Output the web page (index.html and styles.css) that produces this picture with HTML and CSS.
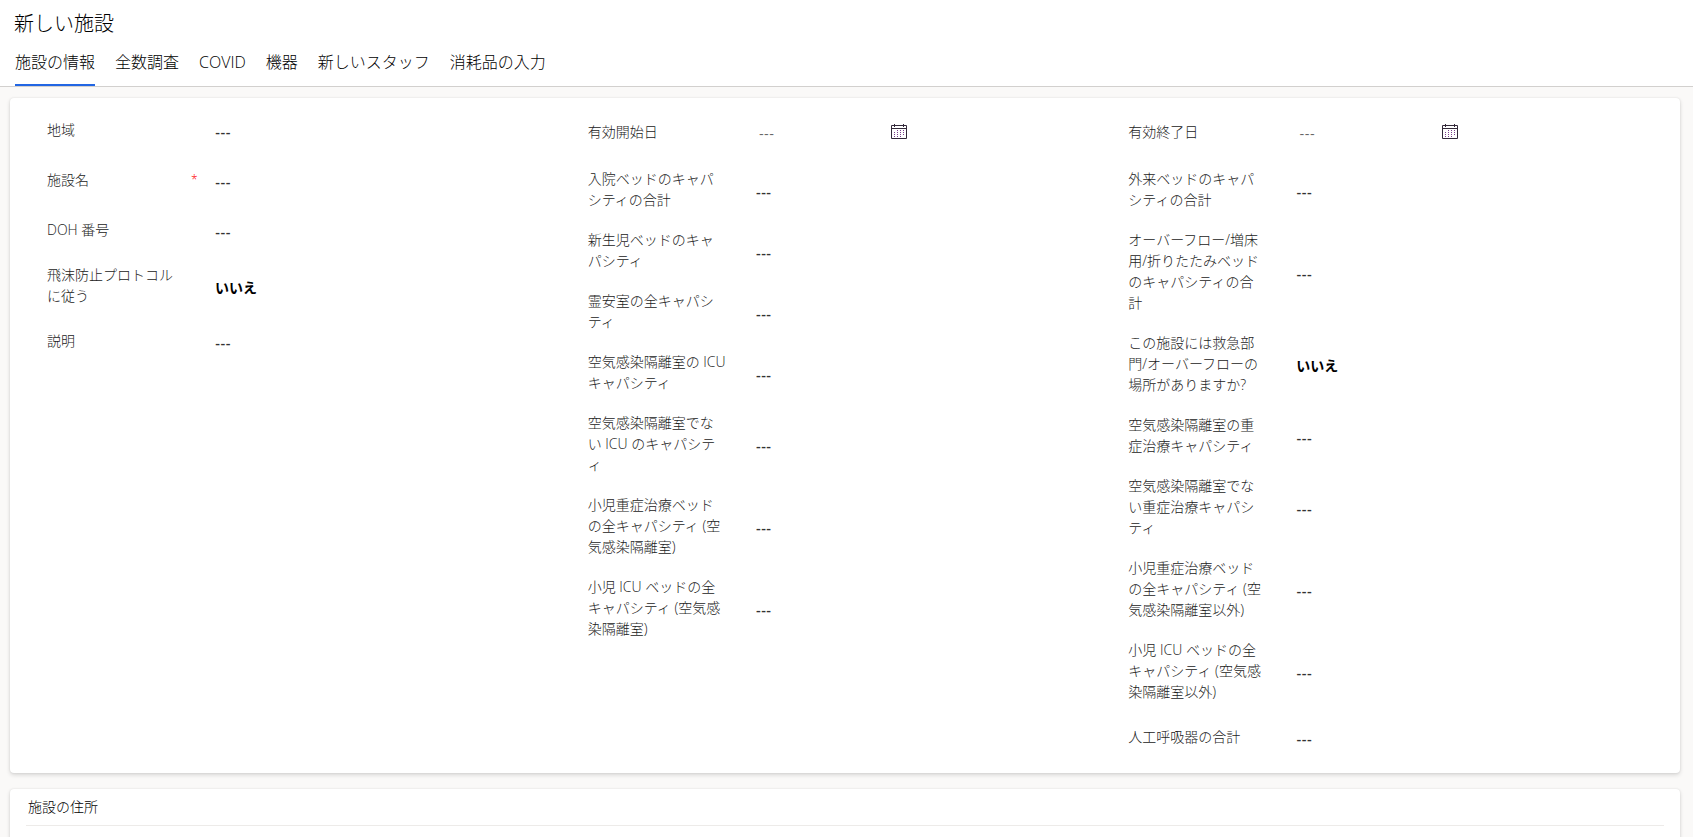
FILE: index.html
```html
<!DOCTYPE html>
<html lang="ja">
<head>
<meta charset="utf-8">
<title>新しい施設</title>
<link rel="stylesheet" href="styles.css">
</head>
<body>
<svg class="sprite" aria-hidden="true">
  <symbol id="calendar" viewBox="0 0 16 16">
    <path d="M6 6.5h1m2 0h1m2 0h1M3 8.5h1m2 0h1m2 0h1m2 0h1M3 10.5h1m2 0h1m2 0h1m2 0h1M3 12.5h1m2 0h1m2 0h1" fill="none" stroke="#7b3f8c"/>
    <path d="M.5 1.5h15v13H.5z M0 4.5h16 M3.5 0v3 M12.5 0v3" fill="none" stroke="#33293a"/>
  </symbol>
</svg>
<header class="header">
  <h1 class="title">新しい施設</h1>
  <nav class="tabs" role="tablist">
    <button class="tab active" role="tab" aria-selected="true">施設の情報</button>
    <button class="tab" role="tab">全数調査</button>
    <button class="tab" role="tab">COVID</button>
    <button class="tab" role="tab">機器</button>
    <button class="tab" role="tab">新しいスタッフ</button>
    <button class="tab" role="tab">消耗品の入力</button>
  </nav>
</header>
<main class="main">
  <form class="card form">
    <div class="column">
      <div class="field"><label for="a1">地域</label><input id="a1" class="value" value="---"></div>
      <div class="field"><label for="a2">施設名</label><span class="required">*</span><input id="a2" class="value" value="---" required></div>
      <div class="field"><label for="a3">DOH 番号</label><input id="a3" class="value" value="---"></div>
      <div class="field"><label for="a4">飛沫防止プロトコルに従う</label><button type="button" id="a4" class="value toggle">いいえ</button></div>
      <div class="field"><label for="a5">説明</label><input id="a5" class="value" value="---"></div>
    </div>
    <div class="column">
      <div class="field date"><label for="b1">有効開始日</label><div class="picker"><input id="b1" class="value" value="---"><button type="button" class="open" aria-label="有効開始日を選択"><svg><use href="#calendar"/></svg></button></div></div>
      <div class="field"><label for="b2">入院ベッドのキャパシティの合計</label><input id="b2" class="value" value="---"></div>
      <div class="field"><label for="b3">新生児ベッドのキャパシティ</label><input id="b3" class="value" value="---"></div>
      <div class="field"><label for="b4">霊安室の全キャパシティ</label><input id="b4" class="value" value="---"></div>
      <div class="field"><label for="b5">空気感染隔離室の ICU キャパシティ</label><input id="b5" class="value" value="---"></div>
      <div class="field"><label for="b6">空気感染隔離室でない ICU のキャパシティ</label><input id="b6" class="value" value="---"></div>
      <div class="field"><label for="b7">小児重症治療ベッドの全キャパシティ (空気感染隔離室)</label><input id="b7" class="value" value="---"></div>
      <div class="field"><label for="b8">小児 ICU ベッドの全キャパシティ (空気感染隔離室)</label><input id="b8" class="value" value="---"></div>
    </div>
    <div class="column">
      <div class="field date"><label for="c1">有効終了日</label><div class="picker wide"><input id="c1" class="value" value="---"><button type="button" class="open" aria-label="有効終了日を選択"><svg><use href="#calendar"/></svg></button></div></div>
      <div class="field"><label for="c2">外来ベッドのキャパシティの合計</label><input id="c2" class="value" value="---"></div>
      <div class="field"><label for="c3">オーバーフロー/増床用/折りたたみベッドのキャパシティの合計</label><input id="c3" class="value" value="---"></div>
      <div class="field"><label for="c4">この施設には救急部門/オーバーフローの場所がありますか?</label><button type="button" id="c4" class="value toggle">いいえ</button></div>
      <div class="field"><label for="c5">空気感染隔離室の重症治療キャパシティ</label><input id="c5" class="value" value="---"></div>
      <div class="field"><label for="c6">空気感染隔離室でない重症治療キャパシティ</label><input id="c6" class="value" value="---"></div>
      <div class="field"><label for="c7">小児重症治療ベッドの全キャパシティ (空気感染隔離室以外)</label><input id="c7" class="value" value="---"></div>
      <div class="field"><label for="c8">小児 ICU ベッドの全キャパシティ (空気感染隔離室以外)</label><input id="c8" class="value" value="---"></div>
      <div class="field"><label for="c9">人工呼吸器の合計</label><input id="c9" class="value" value="---"></div>
    </div>
  </form>
  <section class="card address">
    <h2 class="section-title">施設の住所</h2>
  </section>
</main>
</body>
</html>
```
FILE: styles.css
```css
* { box-sizing: border-box; }

body {
  margin: 0;
  height: 100vh;
  overflow: hidden;
  background: #faf9f8;
  color: #000;
  font: 300 14px/21px "Open Sans", "Noto Sans CJK JP", sans-serif;
}

button, input {
  margin: 0;
  padding: 0;
  border: 0;
  background: none;
  color: inherit;
  font: inherit;
}

.sprite { display: none; }

.header {
  background: #fff;
  border-bottom: 1px solid #d2d0ce;
  padding: 11px 14px 0;
}

.title {
  margin: 0;
  font-size: 20px;
  line-height: 26px;
  font-weight: 300;
}

.tabs {
  display: flex;
  gap: 20px;
  padding: 5px 1px 0;
}

.tab {
  height: 44px;
  padding: 0 0 2px;
  border-bottom: 2px solid transparent;
  font-size: 16px;
  line-height: 24px;
}

.tab.active { border-bottom-color: #2266e3; }

.main {
  display: flex;
  flex-direction: column;
  gap: 16px;
  padding: 11px 13px 0 10px;
}

.card {
  background: #fff;
  border-radius: 4px;
  box-shadow: 0 2px 4px rgba(0, 0, 0, .14), 0 0 2px rgba(0, 0, 0, .1);
}

.form {
  display: grid;
  grid-template-columns: repeat(3, 1fr);
  padding: 8px 24px 10px;
}

.field {
  display: grid;
  grid-template-columns: 139px 29px 1fr;
  align-items: center;
  min-height: 50px;
  padding: 8px 13px 11px;
}

.date { min-height: 54px; }

.field label {
  color: #222;
  line-break: loose;
}

.required {
  padding-left: 5px;
  color: #f00;
  font-size: 12px;
}

.value {
  grid-column: 3;
  width: 100%;
  height: 27px;
  padding-top: 6px;
  color: #333;
  font-family: Lato, "Noto Sans CJK JP", sans-serif;
  font-weight: 700;
  text-align: left;
}

.toggle {
  height: 25px;
  padding-top: 4px;
  color: #000;
}

.picker {
  grid-column: 3;
  display: flex;
  align-items: center;
  width: 151px;
  padding-left: 3px;
}

.wide { width: 162px; }

.picker .value {
  flex: 1;
  min-width: 0;
  height: 25px;
  padding-top: 4px;
  color: #666;
  font-weight: 400;
}

.open {
  width: 16px;
  height: 16px;
}

.open svg {
  display: block;
  width: 16px;
  height: 16px;
}

.address {
  min-height: 96px;
  padding: 7px 16px;
}

.section-title {
  margin: 0;
  padding: 0 2px 8px;
  border-bottom: 1px solid #edebe9;
  color: #000;
  font-size: 14px;
  line-height: 21px;
  font-weight: 300;
}
```
